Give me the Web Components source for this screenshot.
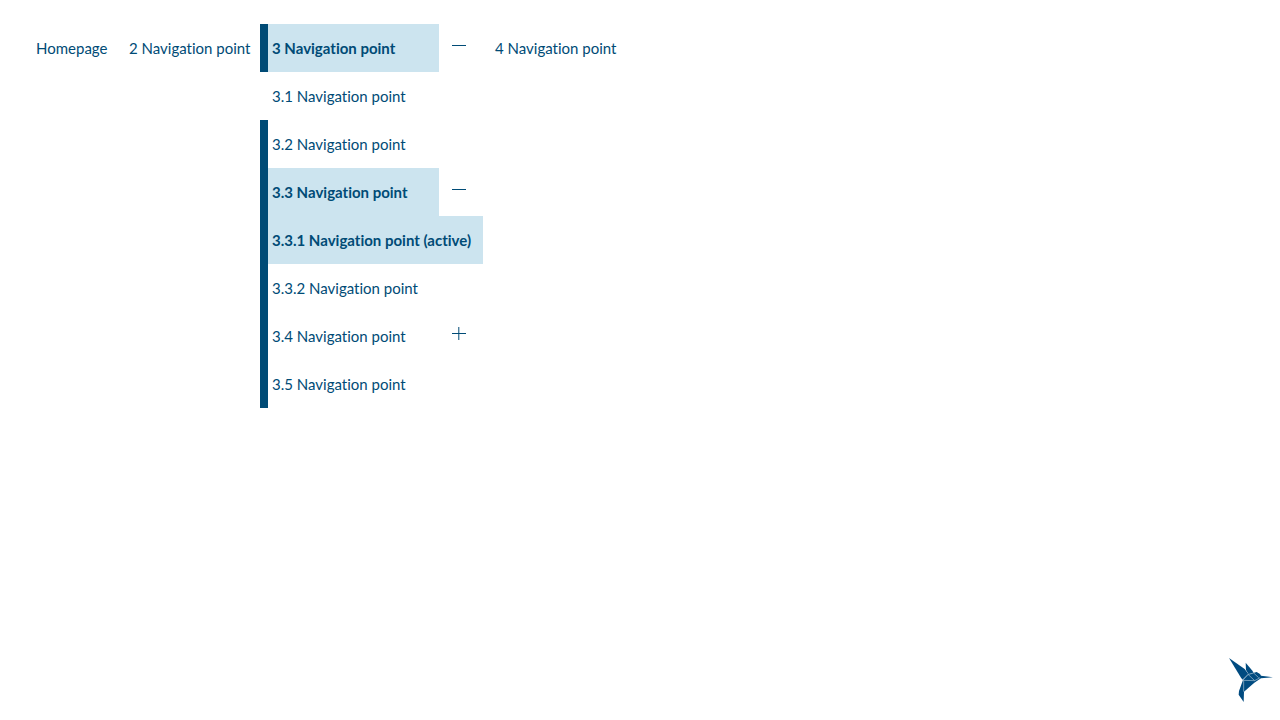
<!DOCTYPE html>
<html lang="en">
<head>
<meta charset="utf-8">
<meta name="viewport" content="width=device-width, initial-scale=1">
<title>Navigation</title>
<style>
  body {
    margin: 0;
    background: #fff;
    color: #004b76;
    font: 15px/24px Lato, "Noto Sans", sans-serif;
    font-variant-ligatures: none;
  }
</style>
</head>
<body>
<main-nav>
  <nav-point label="Homepage" size="s"></nav-point>
  <nav-point label="2 Navigation point" size="m"></nav-point>
  <nav-point label="3 Navigation point" trail bar expanded size="l">
    <nav-point label="3.1 Navigation point"></nav-point>
    <nav-point label="3.2 Navigation point" bar></nav-point>
    <nav-point label="3.3 Navigation point" trail bar expanded>
      <nav-point label="3.3.1 Navigation point (active)" trail bar current></nav-point>
      <nav-point label="3.3.2 Navigation point" bar></nav-point>
    </nav-point>
    <nav-point label="3.4 Navigation point" bar collapsed></nav-point>
    <nav-point label="3.5 Navigation point" bar></nav-point>
  </nav-point>
  <nav-point label="4 Navigation point" size="m"></nav-point>
</main-nav>
<bird-logo></bird-logo>

<script>
class MainNav extends HTMLElement {
  constructor() {
    super();
    this.attachShadow({ mode: "open" }).innerHTML = `
      <style>
        :host { display: block; padding: 24px; }
        nav { display: flex; align-items: flex-start; }
      </style>
      <nav aria-label="Main"><slot></slot></nav>`;
  }
}

class NavPoint extends HTMLElement {
  connectedCallback() {
    if (this.shadowRoot) return;
    const open = this.hasAttribute("expanded");
    const parent = open || this.hasAttribute("collapsed");
    this.attachShadow({ mode: "open" }).innerHTML = `
      <style>
        :host { display: block; white-space: nowrap; }
        :host([size="s"]) { min-width: 93px; }
        :host([size="m"]) { min-width: 143px; }
        :host([size="l"]) { min-width: 223px; }
        .row { display: flex; min-height: 48px; }
        a {
          flex: 1;
          box-sizing: border-box;
          padding: 12px 8px 12px 4px;
          border-left: 8px solid transparent;
          color: inherit;
          text-decoration: none;
        }
        :host([bar]) a { border-left-color: #004b76; }
        :host([trail]) a { background: #cce4ef; font-weight: 700; }
        button {
          display: grid;
          place-items: center;
          width: 44px;
          padding: 0;
          border: 0;
          background: none;
          color: #004b76;
        }
        svg { display: block; width: 24px; height: 24px; }
      </style>
      <div class="row">
        <a href="#"></a>
        ${parent ? `<button type="button" aria-expanded="${open}">
          <svg viewBox="0 0 24 24" fill="none" stroke="currentColor" aria-hidden="true">
            <path d="M3 9.5H17${open ? "" : "M9.8 3V16"}"/>
          </svg>
        </button>` : ""}
      </div>
      <slot></slot>`;
    const label = this.getAttribute("label");
    const link = this.shadowRoot.querySelector("a");
    link.textContent = label;
    if (this.hasAttribute("current")) link.setAttribute("aria-current", "page");
    const button = this.shadowRoot.querySelector("button");
    if (button) button.setAttribute("aria-label", label);
  }
}

class BirdLogo extends HTMLElement {
  constructor() {
    super();
    this.attachShadow({ mode: "open" }).innerHTML = `
      <style>
        :host { display: block; position: fixed; right: 4px; bottom: 16px; }
        svg { display: block; width: 48px; height: 48px; }
      </style>
      <svg viewBox="18 12 144 144" fill="#004b80" role="img" aria-label="Hummingbird">
        <path d="M21 18 L68 51 L79 66 L62 83 L57 77 Z"/>
        <path d="M71 32 L90 55 L95 62 L80 67 L72 54 Z"/>
        <path d="M79 66 L96 62 L104 60 L114 66 L117 71 L153 76 L117 79 L97 92 L66 119 L65 150 L50 128 L51 117 L63 84 Z"/>
        <path d="M62 85 L98 86 L114 77 M80 66 L62 84 M65 85 V119 M78 67 L98 86 M80 67 L95 63 L110 77" fill="none" stroke="#a8c2d4" stroke-width="2"/>
      </svg>`;
  }
}

customElements.define("main-nav", MainNav);
customElements.define("nav-point", NavPoint);
customElements.define("bird-logo", BirdLogo);
</script>
</body>
</html>
